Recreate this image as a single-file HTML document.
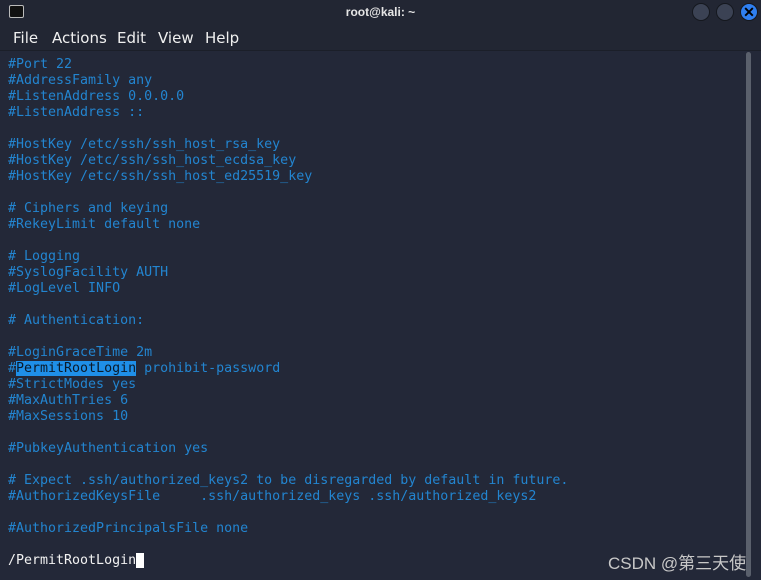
<!DOCTYPE html>
<html><head><meta charset="utf-8"><style>
html,body{margin:0;padding:0;width:761px;height:580px;overflow:hidden;background:#232838;}
.title{position:absolute;left:0;top:0;width:761px;height:24px;background:#222633;color:#e6e6e6;font:bold 12px "Liberation Sans",sans-serif;text-align:center;line-height:24px;}
.ticon{position:absolute;left:9px;top:5px;width:13px;height:11px;border:1px solid #bbb;border-radius:2px;background:#111;}
.btn{position:absolute;top:3px;width:16px;height:16px;border-radius:50%;background:#3b4254;border:1px solid #15181f;}
.menu{position:absolute;left:0;top:24px;width:761px;height:26px;background:#222633;border-bottom:1px solid #1b1f29;font:15px "DejaVu Sans",sans-serif;color:#f0f0f0;}
.menu span{position:absolute;top:5px;}
pre{position:absolute;left:8px;top:57px;margin:0;font:13.3px/16px "DejaVu Sans Mono","Liberation Mono",monospace;color:#2385d0;letter-spacing:0;}
.hl{background:#1f8fe8;color:#0b1a2a;}
.wm{position:absolute;left:608px;top:549px;font:17px "Liberation Sans","Noto Sans CJK SC",sans-serif;color:#c8c8c8;}
.sb{position:absolute;left:746px;top:52px;width:5px;height:525px;border-radius:3px;background:#5a606c;}
</style></head><body>
<div class="title"><div class="ticon"></div>root@kali: ~
<div class="btn" style="left:692px"></div><div class="btn" style="left:716px"></div>
<div class="btn" style="left:740px;background:#2f7ff0;color:#000;font:bold 14px 'Liberation Sans',sans-serif;line-height:16px;text-align:center">✕</div></div>
<div class="menu"><span style="left:13px">File</span><span style="left:52px">Actions</span><span style="left:117px">Edit</span><span style="left:158px">View</span><span style="left:205px">Help</span></div>
<pre>#Port 22
#AddressFamily any
#ListenAddress 0.0.0.0
#ListenAddress ::

#HostKey /etc/ssh/ssh_host_rsa_key
#HostKey /etc/ssh/ssh_host_ecdsa_key
#HostKey /etc/ssh/ssh_host_ed25519_key

# Ciphers and keying
#RekeyLimit default none

# Logging
#SyslogFacility AUTH
#LogLevel INFO

# Authentication:

#LoginGraceTime 2m
#<span class="hl">PermitRootLogin</span> prohibit-password
#StrictModes yes
#MaxAuthTries 6
#MaxSessions 10

#PubkeyAuthentication yes

# Expect .ssh/authorized_keys2 to be disregarded by default in future.
#AuthorizedKeysFile     .ssh/authorized_keys .ssh/authorized_keys2

#AuthorizedPrincipalsFile none

<span style="color:#f2f2f2">/PermitRootLogin<span style="background:#fff">&nbsp;</span></span></pre>
<div class="sb"></div>
<div class="wm">CSDN @第三天使</div>
</body></html>
